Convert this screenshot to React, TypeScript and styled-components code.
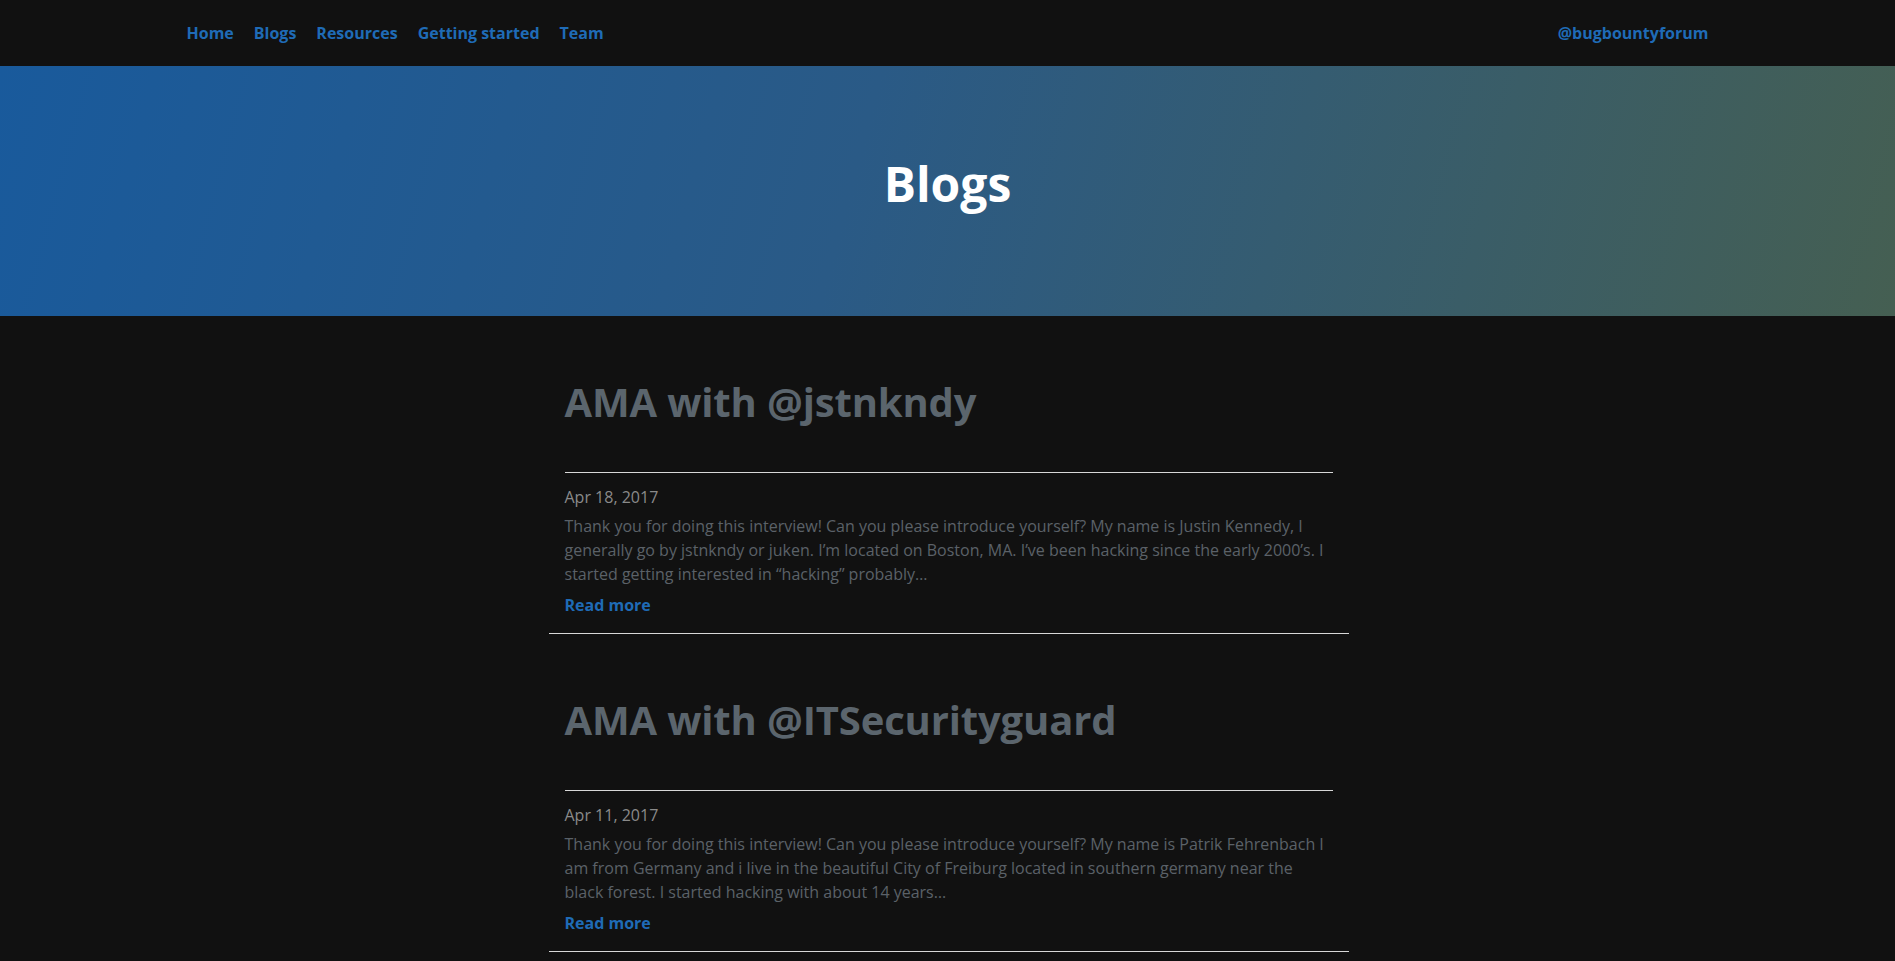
import React from 'react';
import styled, { createGlobalStyle } from 'styled-components';

const Blue = '#1f6bb6';
const Page = '#111111';

const GlobalStyle = createGlobalStyle`
  html, body {
    margin: 0;
    padding: 0;
    background: ${Page};
    font-family: "Open Sans", "Noto Sans", sans-serif;
    -webkit-font-smoothing: antialiased;
  }
  * {
    box-sizing: border-box;
  }
`;

const NavBar = styled.nav`
  height: 66px;
  background: ${Page};
`;

const NavInner = styled.div`
  max-width: 1562px;
  height: 100%;
  margin: 0 auto;
  padding: 0 10px;
  display: flex;
  align-items: center;
  justify-content: space-between;
`;

const NavLinks = styled.ul`
  display: flex;
  list-style: none;
  margin: 0;
  padding: 0;
`;

const NavLink = styled.a`
  display: block;
  padding: 0 10px;
  color: ${Blue};
  font-size: 16px;
  font-weight: 700;
  text-decoration: none;
  cursor: pointer;
`;

const Banner = styled.header`
  height: 250px;
  display: flex;
  align-items: center;
  justify-content: center;
  background: linear-gradient(105deg, #195a9c 0%, #2a5a86 45%, #455f52 100%);
`;

const BannerTitle = styled.h1`
  margin: 0 0 14px;
  color: #ffffff;
  font-size: 48px;
  font-weight: 700;
  line-height: 1.2;
`;

const Main = styled.main`
  width: 800px;
  margin: 0 auto;
  position: relative;
  left: 1px;
`;

const Post = styled.article`
  padding: 59px 16px 16px;
  border-bottom: 1px solid #d8d8d8;
`;

const PostTitle = styled.h2`
  margin: 0;
  color: #5b656d;
  font-size: 40px;
  font-weight: 700;
  line-height: 1.35;
  letter-spacing: -0.15px;
`;

const Rule = styled.hr`
  margin: 43px 0 12px;
  border: 0;
  border-top: 1px solid #d8d8d8;
`;

const PostDate = styled.div`
  color: #8a8a8a;
  font-size: 16px;
  line-height: 24px;
  margin-bottom: 5px;
`;

const Excerpt = styled.p`
  margin: 0 0 7px;
  color: #5b6168;
  font-size: 16px;
  line-height: 24px;
`;

const ReadMore = styled.a`
  color: ${Blue};
  font-size: 16px;
  font-weight: 700;
  line-height: 24px;
  text-decoration: none;
  cursor: pointer;
`;

type BlogPost = {
  title: string;
  date: string;
  excerpt: string;
};

const posts: BlogPost[] = [
  {
    title: 'AMA with @jstnkndy',
    date: 'Apr 18, 2017',
    excerpt:
      'Thank you for doing this interview! Can you please introduce yourself? My name is Justin Kennedy, I generally go by jstnkndy or juken. I’m located on Boston, MA. I’ve been hacking since the early 2000’s. I started getting interested in “hacking” probably…',
  },
  {
    title: 'AMA with @ITSecurityguard',
    date: 'Apr 11, 2017',
    excerpt:
      'Thank you for doing this interview! Can you please introduce yourself? My name is Patrik Fehrenbach I am from Germany and i live in the beautiful City of Freiburg located in southern germany near the black forest. I started hacking with about 14 years…',
  },
];

const navItems = ['Home', 'Blogs', 'Resources', 'Getting started', 'Team'];

export default function App() {
  return (
    <>
      <GlobalStyle />
      <NavBar>
        <NavInner>
          <NavLinks>
            {navItems.map((item) => (
              <li key={item}>
                <NavLink>{item}</NavLink>
              </li>
            ))}
          </NavLinks>
          <NavLink>@bugbountyforum</NavLink>
        </NavInner>
      </NavBar>
      <Banner>
        <BannerTitle>Blogs</BannerTitle>
      </Banner>
      <Main>
        {posts.map((post) => (
          <Post key={post.title}>
            <PostTitle>{post.title}</PostTitle>
            <Rule />
            <PostDate>{post.date}</PostDate>
            <Excerpt>{post.excerpt}</Excerpt>
            <ReadMore>Read more</ReadMore>
          </Post>
        ))}
      </Main>
    </>
  );
}
